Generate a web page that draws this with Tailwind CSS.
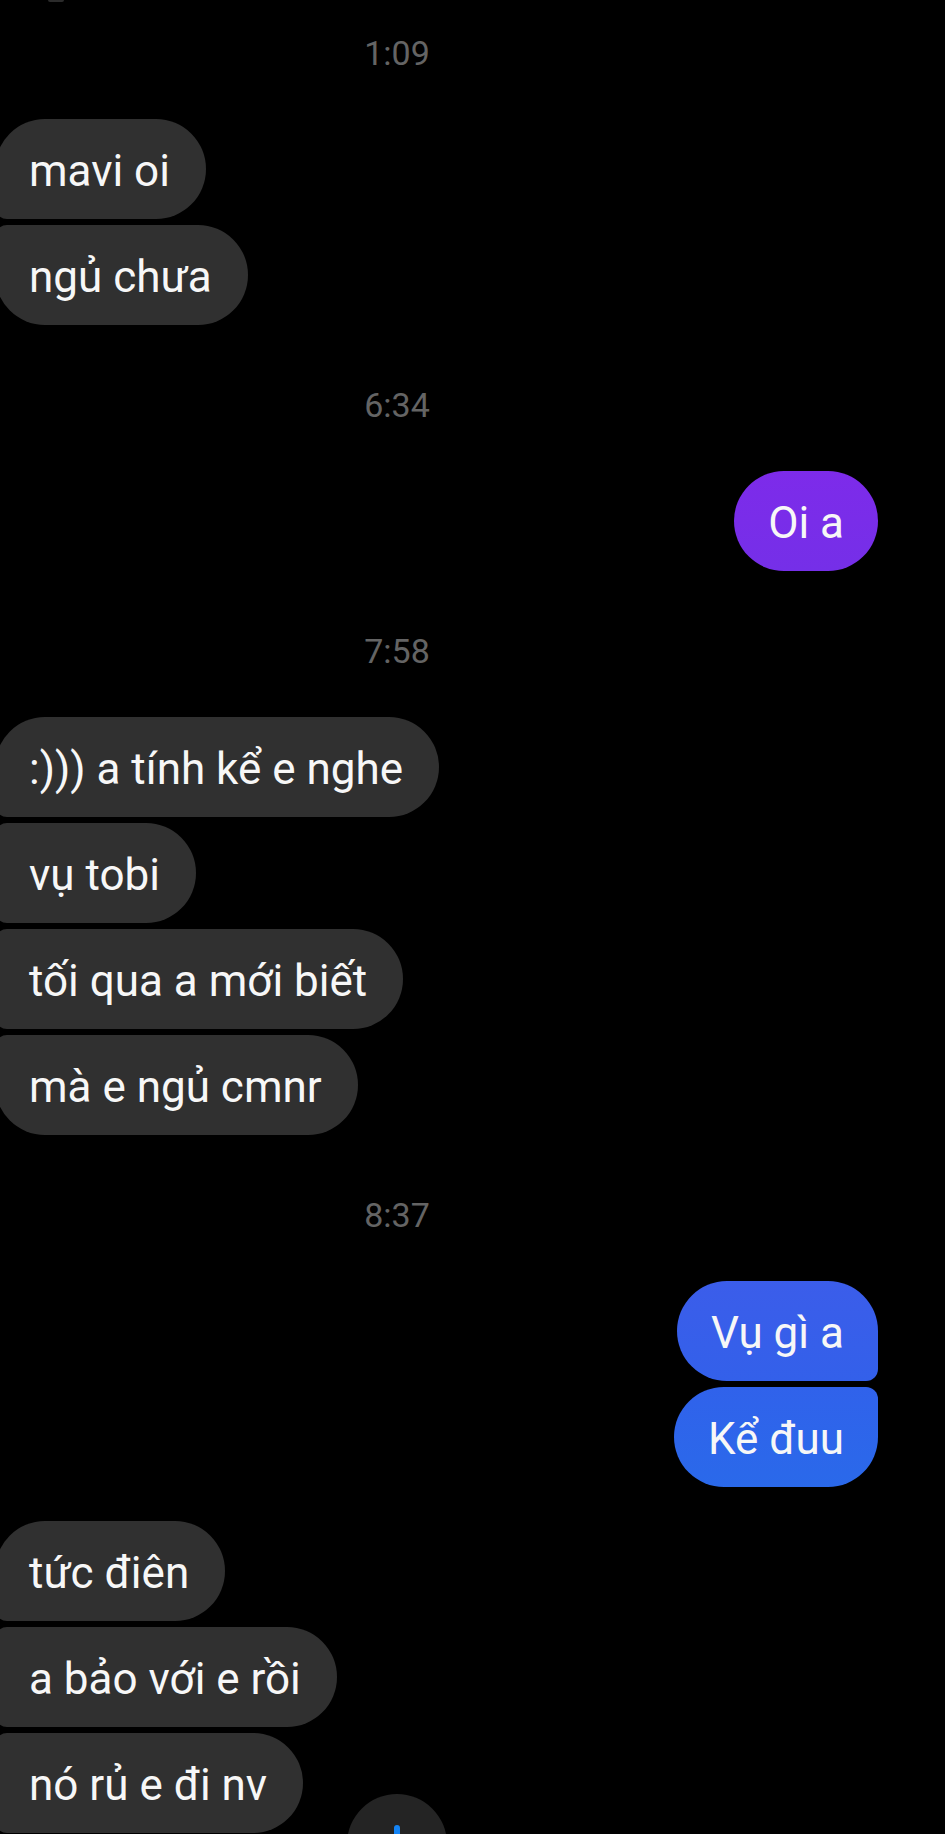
<!DOCTYPE html>
<html lang="vi">
<head>
<meta charset="utf-8">
<meta name="viewport" content="width=device-width, initial-scale=1">
<title>Chat</title>
<script src="https://cdn.jsdelivr.net/npm/@tailwindcss/browser@4"></script>
</head>
<body class="bg-black font-['Roboto',sans-serif]">
<main class="relative min-h-screen overflow-hidden bg-black">
  <div class="-ml-21 mr-[67px] flex flex-col text-[44px] leading-[52px] text-[#f7f7f7]">
    <div class="ml-[132px] h-0.5 w-4 rounded-b-full bg-[#2b2b2b]"></div>
    <time class="pt-[31px] pb-11.5 text-center text-[34px] leading-10 text-[#646464]">1:09</time>

    <ul class="ml-[79px] flex flex-col items-start gap-1.5">
      <li class="rounded-[50px] rounded-bl-xl bg-[#303030] pr-9 pl-8.5 pt-6.5 pb-5.5">mavi oi</li>
      <li class="rounded-[50px] rounded-tl-xl bg-[#303030] pr-9 pl-8.5 pt-6.5 pb-5.5">ngủ chưa</li>
    </ul>

    <time class="pt-15 pb-11.5 text-center text-[34px] leading-10 text-[#646464]">6:34</time>

    <ul class="flex flex-col items-end gap-1.5">
      <li class="rounded-[50px] bg-linear-to-b from-[#7d2bea] to-[#752fe8] px-8.5 pt-6.5 pb-5.5">Oi a</li>
    </ul>

    <time class="pt-15 pb-11.5 text-center text-[34px] leading-10 text-[#646464]">7:58</time>

    <ul class="ml-[79px] flex flex-col items-start gap-1.5">
      <li class="rounded-[50px] rounded-bl-xl bg-[#303030] pr-9 pl-8.5 pt-6.5 pb-5.5">:))) a tính kể e nghe</li>
      <li class="rounded-[50px] rounded-l-xl bg-[#303030] pr-9 pl-8.5 pt-6.5 pb-5.5">vụ tobi</li>
      <li class="rounded-[50px] rounded-l-xl bg-[#303030] pr-9 pl-8.5 pt-6.5 pb-5.5">tối qua a mới biết</li>
      <li class="rounded-[50px] rounded-tl-xl bg-[#303030] pr-9 pl-8.5 pt-6.5 pb-5.5">mà e ngủ cmnr</li>
    </ul>

    <time class="pt-15 pb-11.5 text-center text-[34px] leading-10 text-[#646464]">8:37</time>

    <ul class="flex flex-col items-end gap-1.5">
      <li class="rounded-[50px] rounded-br-xl bg-linear-to-b from-[#3b5dea] to-[#3360ea] px-8.5 pt-6.5 pb-5.5">Vụ gì a</li>
      <li class="rounded-[50px] rounded-tr-xl bg-linear-to-b from-[#3062eb] to-[#2a69ea] px-8.5 pt-6.5 pb-5.5">Kể đuu</li>
    </ul>

    <ul class="mt-8.5 ml-[79px] flex flex-col items-start gap-1.5">
      <li class="rounded-[50px] rounded-bl-xl bg-[#303030] pr-9 pl-8.5 pt-6.5 pb-5.5">tức điên</li>
      <li class="rounded-[50px] rounded-l-xl bg-[#303030] pr-9 pl-8.5 pt-6.5 pb-5.5">a bảo với e rồi</li>
      <li class="rounded-[50px] rounded-l-xl bg-[#303030] pr-9 pl-8.5 pt-6.5 pb-5.5">nó rủ e đi nv</li>
    </ul>
  </div>

  <!-- Floating scroll-to-latest button, half below the fold -->
  <div class="absolute -bottom-15 -left-21 right-[67px] flex justify-center">
    <button type="button" aria-label="Scroll to latest message" class="flex size-25 items-center justify-center rounded-full bg-[#242424]">
      <svg viewBox="0 0 40 40" class="size-10" fill="none" stroke="#1484f5" stroke-width="6" stroke-linecap="round" stroke-linejoin="round" aria-hidden="true"><path d="M20 4v32M7 23l13 13 13-13"/></svg>
    </button>
  </div>
</main>
</body>
</html>
